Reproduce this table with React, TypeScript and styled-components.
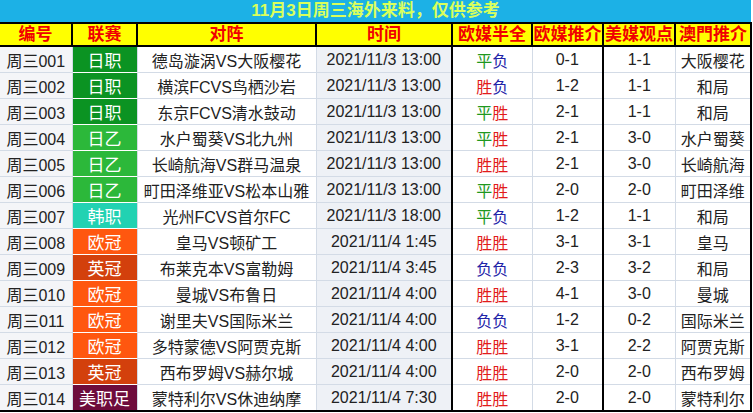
import React from "react";
import styled, { createGlobalStyle } from "styled-components";

const GlobalStyle = createGlobalStyle`
  html, body {
    margin: 0;
    padding: 0;
    background: #ffffff;
  }
  body {
    font-family: "Liberation Sans", "Noto Sans CJK SC", sans-serif;
  }
`;

const Wrapper = styled.div`
  width: 753px;
  height: 413px;
  overflow: hidden;
  background: #ffffff;
`;

const Table = styled.table`
  width: 751px;
  border-collapse: collapse;
  table-layout: fixed;
`;

const TitleCell = styled.td`
  height: 22px;
  padding: 0;
  background: #1cb1e6;
  color: #d9ff5c;
  font-size: 17px;
  font-weight: bold;
  text-align: center;
  line-height: 22px;
  border-bottom: 2px solid #000;
`;

const HeadCell = styled.th`
  height: 21px;
  padding: 0;
  background: #ffff00;
  color: #f00000;
  font-size: 17px;
  font-weight: bold;
  line-height: 21px;
  text-align: center;
  white-space: nowrap;
  overflow: hidden;
  border: 2px solid #000;
  &:first-child {
    border-left: none;
  }
`;

const Row = styled.tr`
  &:last-child td {
    border-bottom: 2px solid #000;
  }
`;

const Cell = styled.td<{ $thick?: boolean; $shade?: boolean; $last?: boolean }>`
  padding: 0;
  height: 25px;
  font-size: 16px;
  color: #222;
  text-align: center;
  white-space: nowrap;
  overflow: hidden;
  background: ${(p) => (p.$shade ? "#eef1f6" : "#ffffff")};
  border: 1px solid #d3dbe6;
  border-left: ${(p) => (p.$thick ? "2px solid #000" : "1px solid #d3dbe6")};
  border-right: ${(p) => (p.$last ? "2px solid #000" : "1px solid #d3dbe6")};
`;

const IdCell = styled(Cell)`
  background: #f4f5f8;
  border-left: none;
`;

const LeagueCell = styled(Cell)<{ $bg: string }>`
  background: ${(p) => p.$bg};
  color: #ffffff;
  font-size: 17px;
  border-top: 1px solid rgba(255, 255, 255, 0.35);
  border-bottom: 1px solid rgba(255, 255, 255, 0.35);
`;

const Mark = styled.span<{ $c: string }>`
  color: ${(p) => p.$c};
`;

const leagueColors: Record<string, string> = {
  日职: "#0b9322",
  日乙: "#2cb83a",
  韩职: "#22d2b2",
  欧冠: "#ff570f",
  英冠: "#d3400c",
  美职足: "#6e0c3c",
};

const markColors: Record<string, string> = {
  胜: "#e21b1b",
  平: "#1e981e",
  负: "#2323a8",
};

type Match = {
  id: string;
  league: string;
  teams: string;
  time: string;
  half: string;
  eu: string;
  us: string;
  macau: string;
};

const matches: Match[] = [
  { id: "周三001", league: "日职", teams: "德岛漩涡VS大阪樱花", time: "2021/11/3 13:00", half: "平负", eu: "0-1", us: "1-1", macau: "大阪樱花" },
  { id: "周三002", league: "日职", teams: "横滨FCVS鸟栖沙岩", time: "2021/11/3 13:00", half: "胜负", eu: "1-2", us: "1-1", macau: "和局" },
  { id: "周三003", league: "日职", teams: "东京FCVS清水鼓动", time: "2021/11/3 13:00", half: "平胜", eu: "2-1", us: "1-1", macau: "和局" },
  { id: "周三004", league: "日乙", teams: "水户蜀葵VS北九州", time: "2021/11/3 13:00", half: "平胜", eu: "2-1", us: "3-0", macau: "水户蜀葵" },
  { id: "周三005", league: "日乙", teams: "长崎航海VS群马温泉", time: "2021/11/3 13:00", half: "胜胜", eu: "2-1", us: "3-0", macau: "长崎航海" },
  { id: "周三006", league: "日乙", teams: "町田泽维亚VS松本山雅", time: "2021/11/3 13:00", half: "平胜", eu: "2-0", us: "2-0", macau: "町田泽维" },
  { id: "周三007", league: "韩职", teams: "光州FCVS首尔FC", time: "2021/11/3 18:00", half: "平负", eu: "1-2", us: "1-1", macau: "和局" },
  { id: "周三008", league: "欧冠", teams: "皇马VS顿矿工", time: "2021/11/4 1:45", half: "胜胜", eu: "3-1", us: "3-1", macau: "皇马" },
  { id: "周三009", league: "英冠", teams: "布莱克本VS富勒姆", time: "2021/11/4 3:45", half: "负负", eu: "2-3", us: "3-2", macau: "和局" },
  { id: "周三010", league: "欧冠", teams: "曼城VS布鲁日", time: "2021/11/4 4:00", half: "胜胜", eu: "4-1", us: "3-0", macau: "曼城" },
  { id: "周三011", league: "欧冠", teams: "谢里夫VS国际米兰", time: "2021/11/4 4:00", half: "负负", eu: "1-2", us: "0-2", macau: "国际米兰" },
  { id: "周三012", league: "欧冠", teams: "多特蒙德VS阿贾克斯", time: "2021/11/4 4:00", half: "胜胜", eu: "3-1", us: "2-2", macau: "阿贾克斯" },
  { id: "周三013", league: "英冠", teams: "西布罗姆VS赫尔城", time: "2021/11/4 4:00", half: "胜胜", eu: "2-0", us: "2-0", macau: "西布罗姆" },
  { id: "周三014", league: "美职足", teams: "蒙特利尔VS休迪纳摩", time: "2021/11/4 7:30", half: "胜胜", eu: "2-0", us: "2-0", macau: "蒙特利尔" },
];

const headers = ["编号", "联赛", "对阵", "时间", "欧媒半全", "欧媒推介", "美媒观点", "澳門推介"];
const widths = [72, 65, 179, 136, 80, 71, 72, 76];

export default function App() {
  return (
    <Wrapper>
      <GlobalStyle />
      <Table>
        <colgroup>
          {widths.map((w, i) => (
            <col key={i} style={{ width: w }} />
          ))}
        </colgroup>
        <thead>
          <tr>
            <TitleCell colSpan={8}>11月3日周三海外来料，仅供参考</TitleCell>
          </tr>
          <tr>
            {headers.map((h) => (
              <HeadCell key={h}>{h}</HeadCell>
            ))}
          </tr>
        </thead>
        <tbody>
          {matches.map((m) => (
            <Row key={m.id}>
              <IdCell>{m.id}</IdCell>
              <LeagueCell $bg={leagueColors[m.league]}>{m.league}</LeagueCell>
              <Cell>{m.teams}</Cell>
              <Cell $shade>{m.time}</Cell>
              <Cell $thick>
                {m.half.split("").map((c, i) => (
                  <Mark key={i} $c={markColors[c]}>
                    {c}
                  </Mark>
                ))}
              </Cell>
              <Cell>{m.eu}</Cell>
              <Cell $thick>{m.us}</Cell>
              <Cell $last>{m.macau}</Cell>
            </Row>
          ))}
        </tbody>
      </Table>
    </Wrapper>
  );
}
